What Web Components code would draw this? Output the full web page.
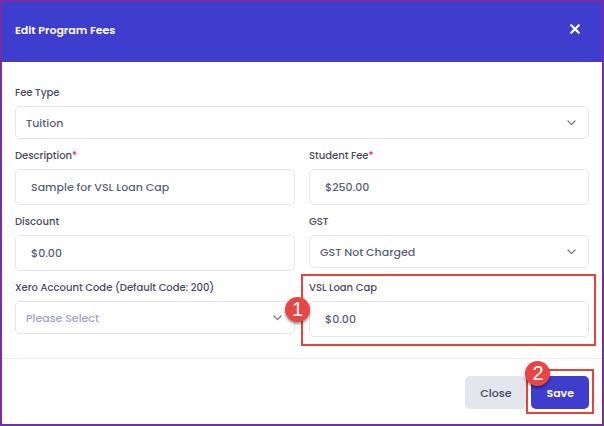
<!DOCTYPE html>
<html lang="en">
<head>
<meta charset="utf-8">
<title>Edit Program Fees</title>
<style>
  html, body { margin: 0; height: 100%; background: #fff; }
  body { font-family: Poppins, Inter, "Open Sans", sans-serif; font-size: 11px; font-weight: 500; line-height: 16px; color: #464557; }
  .grid { display: grid; grid-template-columns: 1fr 1fr; gap: 9px 14px; align-items: start; }
  .wide { grid-column: 1 / -1; }
</style>
</head>
<body>
<modal-dialog heading="Edit Program Fees">
  <div class="grid">
    <fee-select class="wide" label="Fee Type" value="Tuition"></fee-select>
    <fee-input label="Description" value="Sample for VSL Loan Cap" required></fee-input>
    <fee-input label="Student Fee" value="$250.00" required></fee-input>
    <fee-input label="Discount" value="$0.00"></fee-input>
    <fee-select label="GST" value="GST Not Charged"></fee-select>
    <fee-select label="Xero Account Code (Default Code: 200)" value="Please Select" placeholder></fee-select>
    <step-callout step="1" kind="field"><fee-input label="VSL Loan Cap" value="$0.00"></fee-input></step-callout>
  </div>
  <action-button slot="actions" label="Close"></action-button>
  <step-callout slot="actions" step="2" kind="button"><action-button label="Save" primary></action-button></step-callout>
</modal-dialog>

<script>
  const esc = s => s.replace(/&/g, "&amp;").replace(/</g, "&lt;").replace(/"/g, "&quot;");

  class ModalDialog extends HTMLElement {
    connectedCallback() {
      this.attachShadow({ mode: "open" }).innerHTML = `
        <style>
          :host { display: flex; flex-direction: column; box-sizing: border-box; min-height: 100%; border: 2px solid #7430a3; background: #fff; }
          header { display: flex; align-items: center; justify-content: space-between; height: 60px; box-sizing: border-box; padding: 0 21px 6px 13px; background: #3f3dce; color: #fff; }
          h1 { margin: 0; padding-top: 2px; font-size: 11px; line-height: 16px; font-weight: 600; }
          header button { display: flex; padding: 0; border: 0; background: none; color: #fff; cursor: pointer; }
          main { padding: 23px 13px 21px; }
          footer { display: flex; flex: 1; justify-content: flex-end; align-items: flex-start; gap: 5px; padding: 17px 13px 15px; border-top: 1px solid #ebedf3; }
        </style>
        <header>
          <h1>${esc(this.getAttribute("heading"))}</h1>
          <button type="button" aria-label="Close dialog">
            <svg width="12" height="12" viewBox="0 0 12 12" fill="none" stroke="currentColor" stroke-width="2.2" stroke-linecap="round"><path d="M2.2 2.2 9.8 9.8M9.8 2.2 2.2 9.8"/></svg>
          </button>
        </header>
        <main><slot></slot></main>
        <footer><slot name="actions"></slot></footer>`;
    }
  }

  const fieldStyles = `
    :host { display: flex; flex-direction: column; gap: 5px; }
    label { font-size: 10px; line-height: 16px; color: #4b4a5e; }
    .star { color: #f8285a; }
    input, select { width: 100%; box-sizing: border-box; margin: 0; border: 1px solid #e4e6ef; border-radius: 5px; background: #fff; font: inherit; color: #5c5f78; outline: 0; appearance: none; }
    input { height: 36px; padding: 0 15px; }
    select { height: 33px; padding: 0 30px 0 10px; }
    .placeholder { color: #a3a5bb; }
    .control { display: grid; align-items: center; }
    .control > * { grid-area: 1 / 1; }
    svg { justify-self: end; margin-right: 13px; pointer-events: none; }`;

  class FeeInput extends HTMLElement {
    connectedCallback() {
      const required = this.hasAttribute("required");
      this.attachShadow({ mode: "open" }).innerHTML = `
        <style>${fieldStyles}</style>
        <label for="control">${esc(this.getAttribute("label"))}${required ? '<span class="star">*</span>' : ""}</label>
        <input id="control" type="text" value="${esc(this.getAttribute("value"))}"${required ? " required" : ""}>`;
    }
  }

  class FeeSelect extends HTMLElement {
    connectedCallback() {
      this.attachShadow({ mode: "open" }).innerHTML = `
        <style>${fieldStyles}</style>
        <label for="control">${esc(this.getAttribute("label"))}</label>
        <div class="control">
          <select id="control" class="${this.hasAttribute("placeholder") ? "placeholder" : ""}"><option>${esc(this.getAttribute("value"))}</option></select>
          <svg width="9" height="6" viewBox="0 0 9 6" fill="none" stroke="#74788d" stroke-width="1.3" stroke-linecap="round" stroke-linejoin="round"><path d="M1 1 4.5 4.6 8 1"/></svg>
        </div>`;
    }
  }

  class ActionButton extends HTMLElement {
    connectedCallback() {
      this.attachShadow({ mode: "open" }).innerHTML = `
        <style>
          :host { display: block; }
          button { display: block; height: 33px; padding: 0 15px; border: 0; border-radius: 5px; background: #e4e6ef; color: #464557; font: inherit; cursor: pointer; }
          :host([primary]) button { background: #3f3dce; color: #fff; font-weight: 600; }
        </style>
        <button type="button">${esc(this.getAttribute("label"))}</button>`;
    }
  }

  class StepCallout extends HTMLElement {
    connectedCallback() {
      this.attachShadow({ mode: "open" }).innerHTML = `
        <style>
          :host { display: block; position: relative; }
          .frame { position: absolute; inset: -6px -7px -9px -8px; border: 2px solid #e8403a; pointer-events: none; }
          :host([kind="button"]) .frame { inset: -7px -5px -5px; }
          .badge { position: absolute; top: 17px; left: -24px; display: flex; align-items: center; justify-content: center; width: 25px; height: 25px; border-radius: 50%; background: #e84545; box-shadow: 0 2px 3px rgb(0 0 0 / 45%); color: #fff; font: 20px/25px "Liberation Sans", Arial, sans-serif; }
          :host([kind="button"]) .badge { top: -15px; left: -6px; }
        </style>
        <slot></slot>
        <div class="frame"></div>
        <span class="badge">${esc(this.getAttribute("step"))}</span>`;
    }
  }

  customElements.define("modal-dialog", ModalDialog);
  customElements.define("fee-input", FeeInput);
  customElements.define("fee-select", FeeSelect);
  customElements.define("action-button", ActionButton);
  customElements.define("step-callout", StepCallout);
</script>
</body>
</html>
